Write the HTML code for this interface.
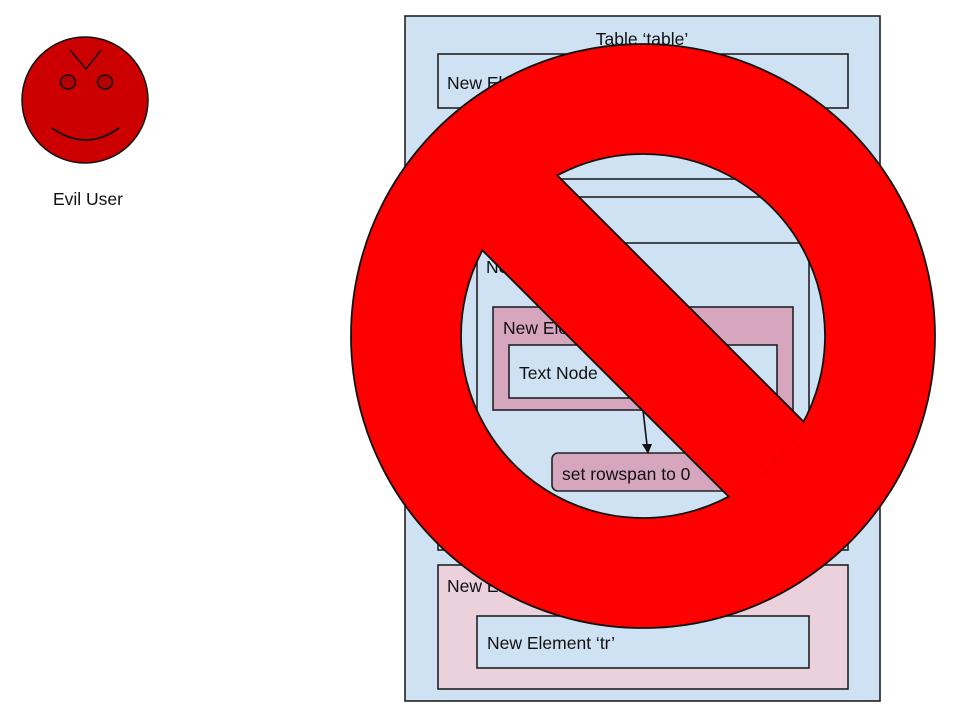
<!DOCTYPE html>
<html><head><meta charset="utf-8"><style>
html,body{margin:0;padding:0;background:#fff;}
svg{display:block;}
text{font-family:"Liberation Sans",Arial,sans-serif;font-size:17.5px;fill:#111;}
</style></head><body>
<svg width="960" height="720" viewBox="0 0 960 720" xmlns="http://www.w3.org/2000/svg">
<defs>
<clipPath id="inner"><circle cx="643" cy="336" r="183"/></clipPath>
</defs>
<!-- Evil user -->
<circle cx="85" cy="100" r="63" fill="#cc0000" stroke="#111" stroke-width="1.5"/>
<ellipse cx="68" cy="82" rx="7.5" ry="7" fill="#b30000" stroke="#111" stroke-width="1.5"/>
<ellipse cx="105" cy="82" rx="7.5" ry="7" fill="#b30000" stroke="#111" stroke-width="1.5"/>
<polyline points="70,50 86,69 101,50" fill="none" stroke="#111" stroke-width="1.5"/>
<path d="M52,128 Q86,152 119,128" fill="none" stroke="#111" stroke-width="1.8"/>
<text x="88" y="205" text-anchor="middle">Evil User</text>

<!-- Table diagram -->
<g stroke="#222" stroke-width="1.6">
<rect x="405" y="16" width="475" height="685" fill="#cfe2f3"/>
<rect x="438" y="54" width="410" height="54" fill="#cfe2f3"/>
<rect x="438" y="179" width="410" height="371" fill="#cfe2f3"/>
<rect x="458" y="197" width="370" height="340" fill="#cfe2f3"/>
<rect x="477" y="243" width="332" height="280" fill="#cfe2f3"/>
<rect x="493" y="307" width="300" height="103" fill="#d5a6bd"/>
<rect x="509" y="345" width="268" height="53" fill="#cfe2f3"/>
<rect x="552" y="453" width="200" height="38" rx="6" fill="#d5a6bd"/>
<rect x="438" y="565" width="410" height="124" fill="#ead1dc"/>
<rect x="477" y="616" width="332" height="52" fill="#cfe2f3"/>
<line x1="643" y1="410" x2="647" y2="445" stroke="#111"/>
</g>
<polygon points="642,444 652,444 648,454" fill="#111"/>
<text x="642" y="45" text-anchor="middle">Table ‘table’</text>
<text x="447" y="89">New Element</text>
<text x="486" y="273">New Element</text>
<text x="503" y="334">New Element</text>
<text x="519" y="379">Text Node</text>
<text x="562" y="480">set rowspan to 0</text>
<text x="447" y="592">New Element</text>
<text x="487" y="649">New Element ‘tr’</text>

<!-- No sign -->
<path d="M643,44 A292,292 0 1,1 642.99,44 Z M643,154 A182,182 0 1,0 643.01,154 Z" fill="#ff0000" fill-rule="evenodd" stroke="#111" stroke-width="1.8"/>
<g clip-path="url(#inner)">
<rect x="393" y="283" width="500" height="106" fill="#ff0000" stroke="#111" stroke-width="1.8" transform="rotate(45 643 336)"/>
</g>
</svg>
</body></html>
